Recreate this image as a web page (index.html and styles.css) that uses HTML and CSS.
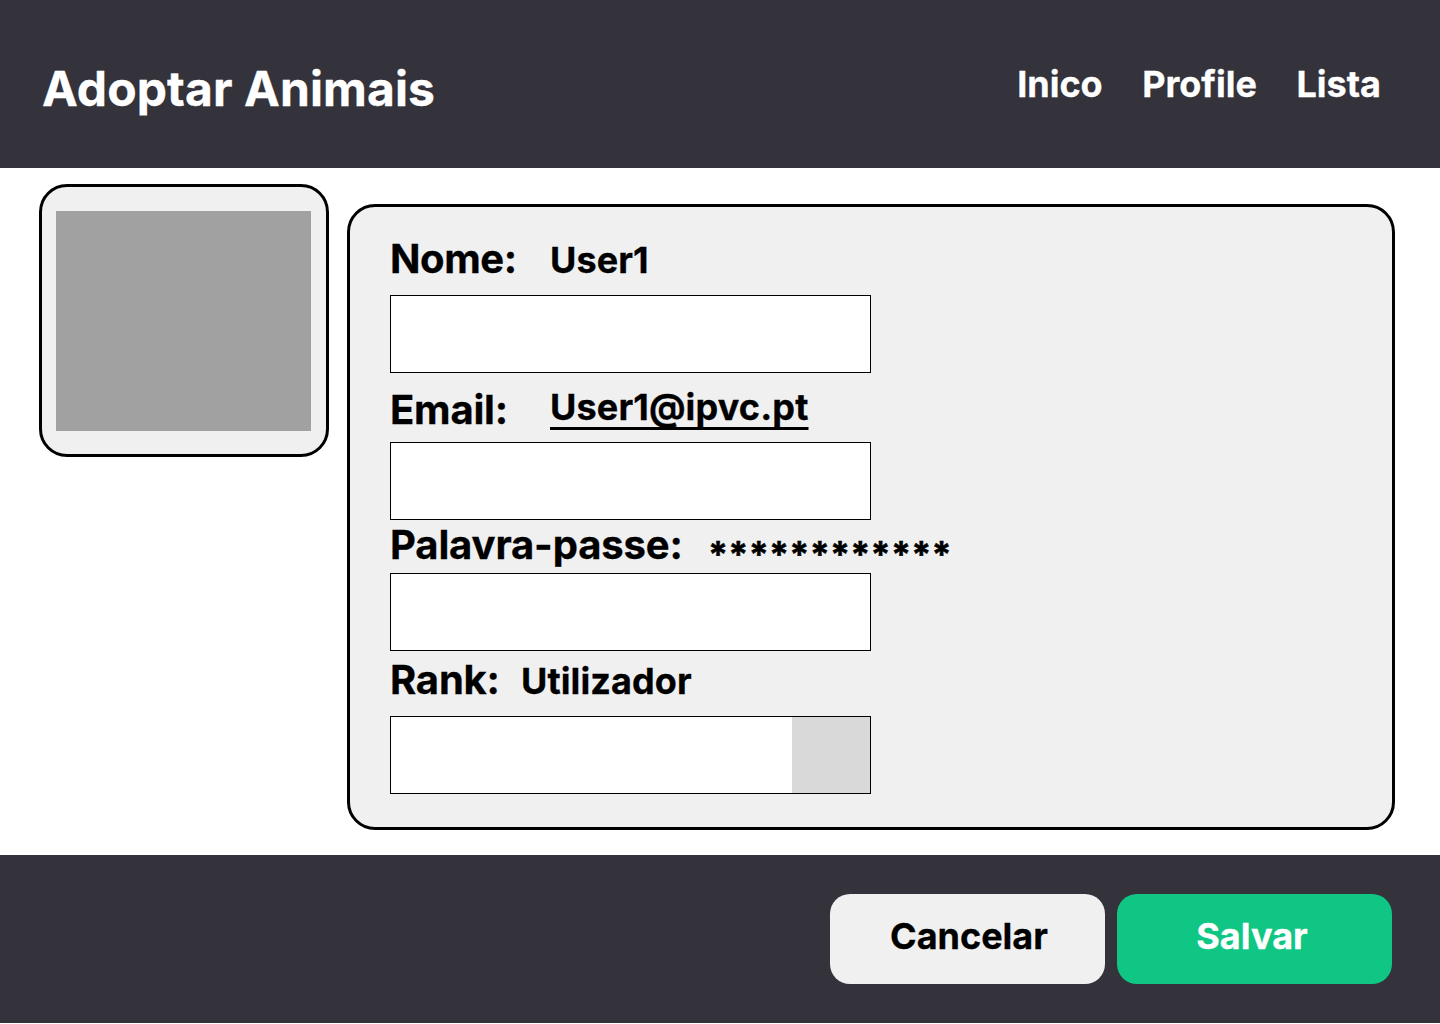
FILE: index.html
```
<!DOCTYPE html>
<html lang="pt">
<head>
<meta charset="utf-8">
<title>Adoptar Animais</title>
<link rel="stylesheet" href="styles.css">
</head>
<body>
<header class="header">
  <h1 class="brand">Adoptar Animais</h1>
  <nav class="nav"><a>Inico</a><a>Profile</a><a>Lista</a></nav>
</header>
<main class="main">
  <aside class="avatar-card"><div class="avatar"></div></aside>
  <section class="panel">
    <div class="row row-name"><span class="label">Nome:</span><span class="value">User1</span></div>
    <div class="field"></div>
    <div class="row row-email"><span class="label">Email:</span><span class="value mail">User1@ipvc.pt</span></div>
    <div class="field"></div>
    <div class="row row-pass"><span class="label">Palavra-passe:</span><span class="value">************</span></div>
    <div class="field"></div>
    <div class="row row-rank"><span class="label">Rank:</span><span class="value">Utilizador</span></div>
    <div class="field select"><div class="select-button"></div></div>
  </section>
</main>
<footer class="footer">
  <button class="button cancel">Cancelar</button>
  <button class="button save">Salvar</button>
</footer>
</body>
</html>
```
FILE: styles.css
```
* { box-sizing: border-box; }
body { margin: 0; height: 1024px; overflow: hidden; background: #fff; color: #000; font-family: Inter, sans-serif; font-weight: 700; font-size: 36px; line-height: 44px; letter-spacing: 0.1px; -webkit-text-stroke: 0.3px; }
.header { height: 168px; background: #34323b; color: #fff; display: flex; justify-content: space-between; align-items: flex-start; padding: 60px 59px 0 42px; }
.brand { margin: 0; font-size: 48px; line-height: 58px; font-weight: 700; }
.nav { display: flex; gap: 39.5px; padding-top: 2px; letter-spacing: 0; }
.main { height: 687px; display: flex; align-items: flex-start; gap: 18px; padding: 16px 45px 0 39px; }
.avatar-card { width: 290px; height: 273px; border: 3px solid #000; border-radius: 28px; background: #f0f0f0; padding: 24px 0 0 14px; }
.avatar { width: 255px; height: 220px; background: #a1a1a1; }
.panel { width: 1048px; height: 626px; margin-top: 20px; border: 3px solid #000; border-radius: 28px; background: #f0f0f0; padding-left: 40px; }
.row { display: flex; align-items: flex-start; white-space: nowrap; }
.label { font-size: 40px; line-height: 48px; letter-spacing: -0.2px; }
.row-name { height: 88px; padding-top: 28px; }
.row-name .label { width: 160px; letter-spacing: -0.4px; }
.row-name .value { padding-top: 3px; }
.row-email { height: 69px; padding-top: 12px; }
.row-email .label { width: 160px; padding-top: 1px; }
.row-pass { height: 53px; padding-top: 1px; }
.row-pass .label { width: 318px; letter-spacing: -0.12px; }
.row-pass .value { padding-top: 11px; letter-spacing: 0.2px; -webkit-text-stroke: 0.5px; }
.row-rank { height: 65px; padding-top: 5px; }
.row-rank .label { width: 131px; }
.row-rank .value { padding-top: 3px; }
.mail { letter-spacing: 0.15px; text-decoration: underline; text-decoration-thickness: 2.5px; text-decoration-skip-ink: none; text-underline-offset: 7px; }
.field { width: 481px; height: 78px; border: 1px solid #000; background: #fff; }
.select { display: flex; justify-content: flex-end; }
.select-button { width: 78px; background: #d9d9d9; }
.footer { height: 168px; background: #34323b; display: flex; justify-content: flex-end; gap: 12px; padding: 39px 48px 0 0; }
.button { width: 275px; height: 90px; border: 0; border-radius: 20px; font: inherit; padding: 0 0 6px; }
.cancel { background: #f0f0f0; color: #000; padding-left: 3px; }
.save { background: #0fc684; color: #fff; padding-right: 5px; }
```
